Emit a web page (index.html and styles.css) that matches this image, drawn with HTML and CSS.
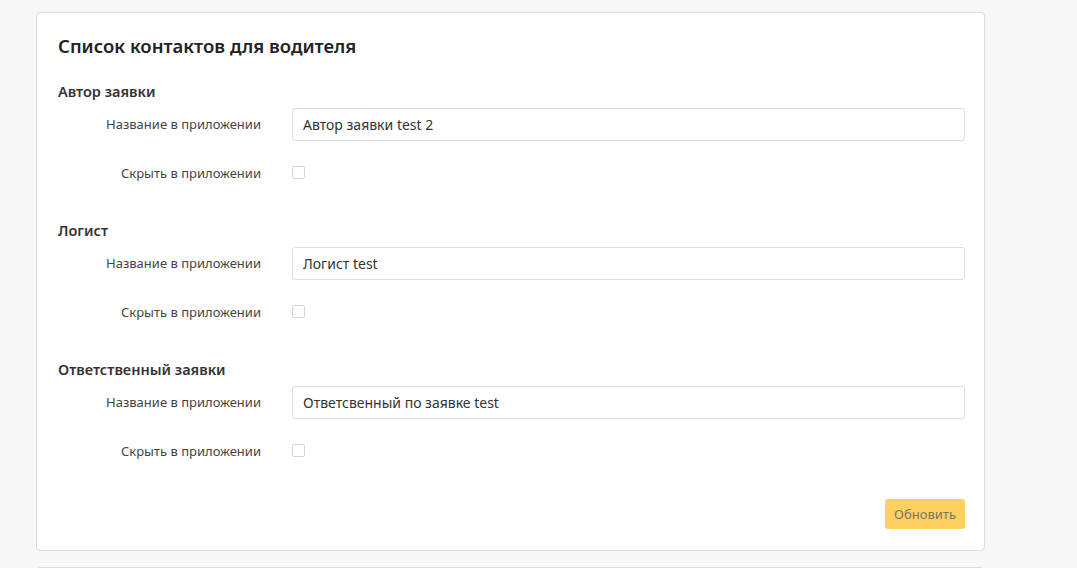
FILE: index.html
```html
<!DOCTYPE html>
<html lang="ru">
<head>
  <meta charset="UTF-8">
  <meta name="viewport" content="width=device-width, initial-scale=1.0">
  <title>Список контактов для водителя</title>
  <link rel="stylesheet" href="styles.css">
</head>
<body>

  <div class="page">
    <div class="card">
      <h1>Список контактов для водителя</h1>

      <div class="contact">
        <h2>Автор заявки</h2>
        <div class="row">
          <label for="author-name">Название в приложении</label>
          <input type="text" id="author-name" value="Автор заявки test 2">
        </div>
        <div class="row">
          <label for="author-hide">Скрыть в приложении</label>
          <input type="checkbox" id="author-hide">
        </div>
      </div>

      <div class="contact">
        <h2>Логист</h2>
        <div class="row">
          <label for="logist-name">Название в приложении</label>
          <input type="text" id="logist-name" value="Логист test">
        </div>
        <div class="row">
          <label for="logist-hide">Скрыть в приложении</label>
          <input type="checkbox" id="logist-hide">
        </div>
      </div>

      <div class="contact">
        <h2>Ответственный заявки</h2>
        <div class="row">
          <label for="resp-name">Название в приложении</label>
          <input type="text" id="resp-name" value="Ответсвенный по заявке test">
        </div>
        <div class="row">
          <label for="resp-hide">Скрыть в приложении</label>
          <input type="checkbox" id="resp-hide">
        </div>
      </div>

      <div class="actions">
        <button disabled>Обновить</button>
      </div>
    </div>

    <div class="card next"></div>
  </div>

</body>
</html>
```

FILE: styles.css
```css
* {
  font-family: 'Noto Sans', 'Open Sans', sans-serif;
  box-sizing: border-box;
}

body {
  margin: 0;
  background-color: #f7f7f7;
  color: #333;
}

.page {
  padding: 12px 0 0 36px;
  width: 985px;
}

.card {
  background: #fff;
  border: 1px solid #dcdcdc;
  border-radius: 4px;
  padding: 21px 19px 21px 21px;
}

.card.next {
  margin-top: 16px;
  height: 40px;
}

h1 {
  margin: 0;
  font-size: 18.5px;
  line-height: 24px;
  font-weight: 600;
  color: #222;
}

.contact {
  margin-top: 23px;
}

.contact + .contact {
  margin-top: 30px;
}

h2 {
  margin: 0 0 7px;
  font-size: 14.5px;
  line-height: 20px;
  font-weight: 600;
  color: #333;
}

.row {
  display: grid;
  grid-template-columns: 203px 1fr;
  column-gap: 31px;
  align-items: center;
  height: 33px;
}

.row + .row {
  margin-top: 16px;
}

label {
  text-align: right;
  font-size: 13px;
  line-height: 18px;
  margin-top: -2px;
  color: #444;
}

input[type="text"] {
  width: 100%;
  height: 33px;
  padding: 0 10px;
  border: 1px solid #ddd;
  border-radius: 3px;
  font-size: 14px;
  color: #333;
}

input[type="checkbox"] {
  appearance: none;
  margin: -2px 0 0;
  width: 13px;
  height: 13px;
  border: 1px solid #d6d6d6;
  border-radius: 2px;
  background: #fff;
}

.actions {
  display: flex;
  justify-content: flex-end;
  margin-top: 31px;
}

button {
  height: 30px;
  padding: 0 9px;
  border: none;
  border-radius: 3px;
  background-color: #fdd05f;
  color: #77766b;
  font-size: 13px;
}
```
